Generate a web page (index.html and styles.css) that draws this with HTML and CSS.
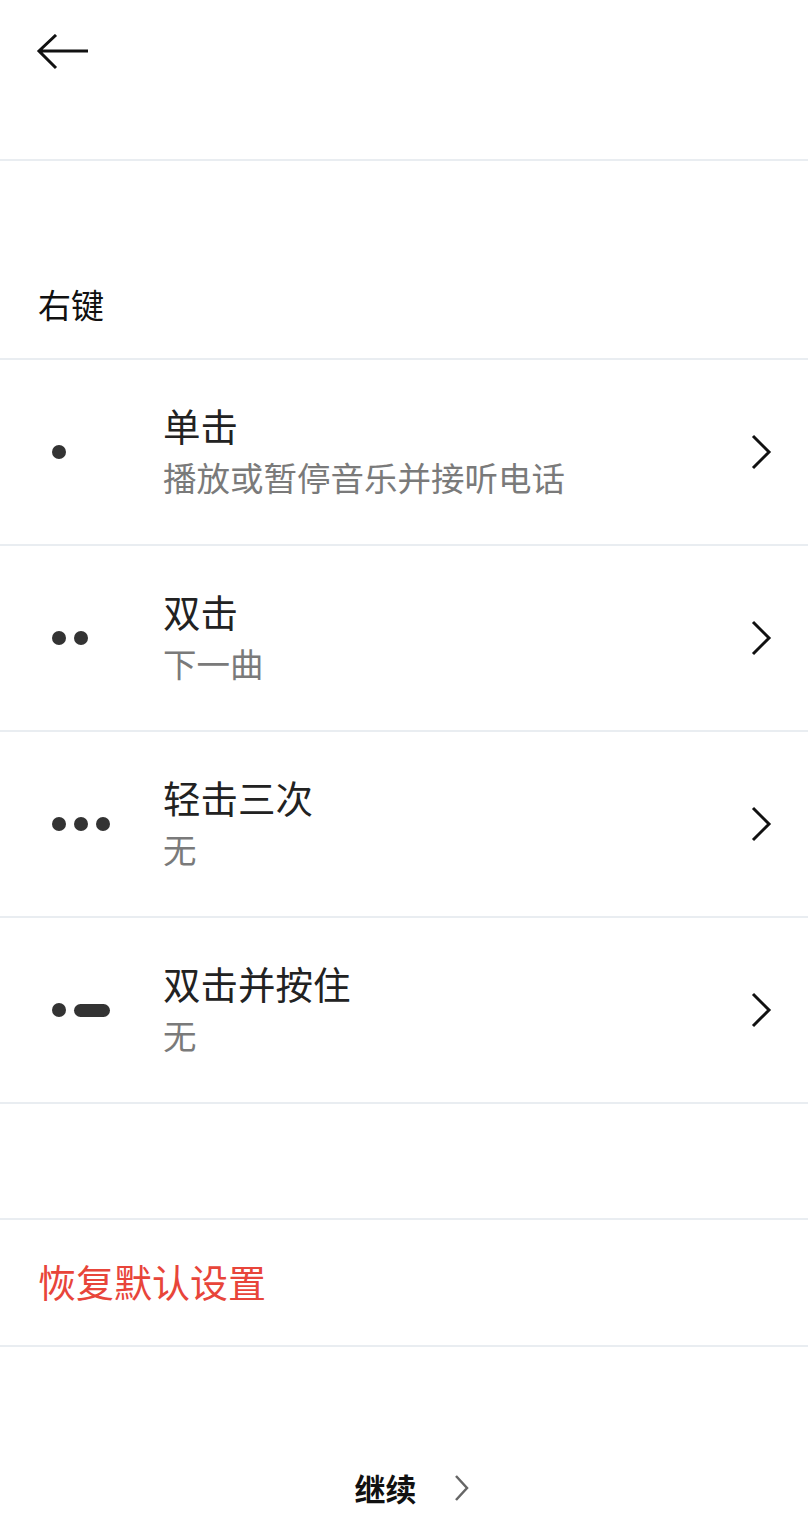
FILE: index.html
```html
<!DOCTYPE html>
<html lang="zh-CN">
<head>
  <meta charset="UTF-8">
  <title>右键</title>
  <link rel="stylesheet" href="styles.css">
</head>
<body>

  <div class="top-bar">
    <svg class="back-icon" width="54" height="36" viewBox="0 0 54 36">
      <path d="M52 17 H3 M20 1 L3 17 L20 34" fill="none" stroke="#111" stroke-width="3"/>
    </svg>
  </div>

  <div class="section-title">右键</div>

  <div class="gesture-list">
    <div class="gesture-row">
      <div class="gesture-icon"><span class="dot"></span></div>
      <div class="gesture-text">
        <div class="gesture-name">单击</div>
        <div class="gesture-action">播放或暂停音乐并接听电话</div>
      </div>
      <svg class="chevron" width="22" height="36" viewBox="0 0 22 36"><path d="M3 2 L19 18 L3 34" fill="none" stroke="#111" stroke-width="3"/></svg>
    </div>
    <div class="gesture-row">
      <div class="gesture-icon"><span class="dot"></span><span class="dot"></span></div>
      <div class="gesture-text">
        <div class="gesture-name">双击</div>
        <div class="gesture-action">下一曲</div>
      </div>
      <svg class="chevron" width="22" height="36" viewBox="0 0 22 36"><path d="M3 2 L19 18 L3 34" fill="none" stroke="#111" stroke-width="3"/></svg>
    </div>
    <div class="gesture-row">
      <div class="gesture-icon"><span class="dot"></span><span class="dot"></span><span class="dot"></span></div>
      <div class="gesture-text">
        <div class="gesture-name">轻击三次</div>
        <div class="gesture-action">无</div>
      </div>
      <svg class="chevron" width="22" height="36" viewBox="0 0 22 36"><path d="M3 2 L19 18 L3 34" fill="none" stroke="#111" stroke-width="3"/></svg>
    </div>
    <div class="gesture-row">
      <div class="gesture-icon"><span class="dot"></span><span class="dash"></span></div>
      <div class="gesture-text">
        <div class="gesture-name">双击并按住</div>
        <div class="gesture-action">无</div>
      </div>
      <svg class="chevron" width="22" height="36" viewBox="0 0 22 36"><path d="M3 2 L19 18 L3 34" fill="none" stroke="#111" stroke-width="3"/></svg>
    </div>
  </div>

  <div class="reset-row">恢复默认设置</div>

  <div class="continue">
    <span>继续</span>
    <svg width="16" height="28" viewBox="0 0 16 28"><path d="M2 2 L13 14 L2 26" fill="none" stroke="#666" stroke-width="2.5"/></svg>
  </div>

</body>
</html>
```

FILE: styles.css
```css
html {
  font-family: "Noto Sans CJK SC", "Noto Sans", sans-serif;
}

body {
  margin: 0;
  background-color: #fff;
  color: #222;
  height: 1538px;
  overflow: hidden;
}

.top-bar {
  height: 161px;
  padding-left: 36px;
  padding-top: 34px;
  box-sizing: border-box;
  border-bottom: 2px solid #e9edf1;
}

.back-icon {
  display: block;
}

.section-title {
  height: 199px;
  box-sizing: border-box;
  padding: 121px 0 0 38px;
  font-size: 33px;
  line-height: 44px;
  color: #111;
  border-bottom: 2px solid #e9edf1;
}

.gesture-row {
  height: 186px;
  box-sizing: border-box;
  border-bottom: 2px solid #e9edf1;
  display: flex;
  align-items: center;
  padding: 0 36px 0 52px;
}

.gesture-icon {
  width: 111px;
  display: flex;
  align-items: center;
  gap: 8px;
}

.dot {
  width: 14px;
  height: 14px;
  border-radius: 50%;
  background-color: #333;
}

.dash {
  width: 36px;
  height: 13px;
  border-radius: 7px;
  background-color: #333;
}

.gesture-text {
  flex: 1;
  padding-bottom: 4px;
}

.gesture-name {
  font-size: 37.5px;
  line-height: 50px;
  color: #222;
}

.gesture-action {
  font-size: 33.5px;
  line-height: 46px;
  color: #7a7a7a;
  margin-top: 4px;
}

.chevron {
  display: block;
}

.reset-row {
  margin-top: 114px;
  border-top: 2px solid #e9edf1;
  border-bottom: 2px solid #e9edf1;
  height: 129px;
  box-sizing: border-box;
  padding-left: 38px;
  padding-bottom: 4px;
  display: flex;
  align-items: center;
  font-size: 38px;
  color: #e8453a;
}

.continue {
  display: flex;
  justify-content: center;
  align-items: center;
  gap: 37px;
  margin-top: 118px;
  padding-left: 16px;
  font-size: 31px;
  font-weight: bold;
  color: #111;
}

.continue svg {
  display: block;
}
```
